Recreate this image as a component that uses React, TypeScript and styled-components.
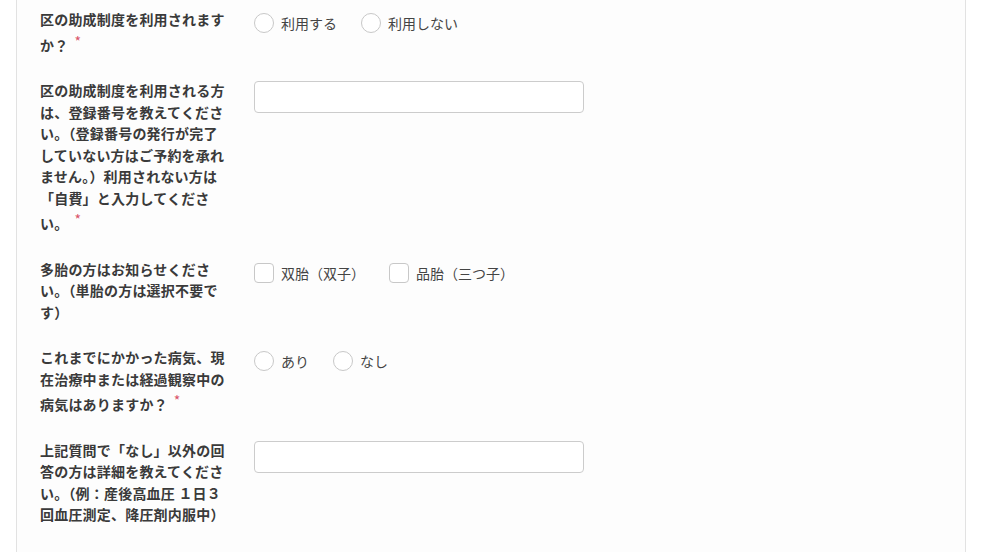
import React from 'react';
import styled, {createGlobalStyle} from 'styled-components';

const GlobalStyle = createGlobalStyle`
  html, body {
    margin: 0;
    padding: 0;
    background: #ffffff;
  }
  body {
    font-family: "Noto Sans CJK JP", "Noto Sans", sans-serif;
  }
`

const Panel = styled.div`
  margin: 0 17px 0 16px;
  border-left: 1px solid #e2e2e2;
  border-right: 1px solid #e2e2e2;
  background: #fdfdfd;
  padding: 9px 23px 24px;
  min-height: 552px;
  box-sizing: border-box;
  display: flex;
  flex-direction: column;
  gap: 24px;
`

const Row = styled.div`
  display: grid;
  grid-template-columns: 190px 330px;
  column-gap: 24px;
  align-items: start;
`

const Label = styled.div`
  font-size: 14px;
  font-weight: bold;
  color: #3a3a3a;
  line-height: 21.5px;
  letter-spacing: 0.2px;
`

const LabelLine = styled.div<{ $marked?: boolean }>`
  padding-top: ${p => p.$marked ? '3px' : '0'};
`

const Required = styled.span`
  color: #d9546a;
  font-size: 14px;
  font-weight: normal;
  vertical-align: 4px;
  margin-left: 6px;
  line-height: 1;
`

const Options = styled.div`
  display: flex;
  gap: 24px;
  margin-top: 4px;
`

const Option = styled.label`
  display: flex;
  align-items: center;
  gap: 7px;
  font-size: 14px;
  color: #444;
  line-height: 20px;
  cursor: pointer;
`

const Mark = styled.span<{ $round?: boolean }>`
  width: 20px;
  height: 20px;
  box-sizing: border-box;
  border: 1px solid #c8c8c8;
  border-radius: ${p => p.$round ? '50%' : '4px'};
  background: #fff;
  flex-shrink: 0;
`

const TextInput = styled.input`
  margin-top: 1px;
  width: 330px;
  height: 32px;
  box-sizing: border-box;
  border: 1px solid #cccccc;
  border-radius: 4px;
  background: #fff;
  outline: none;
`

interface Question {
    label: string[],
    required?: boolean,
    kind: 'radio' | 'checkbox' | 'text',
    options?: string[]
}

const questions: Question[] = [
    {label: ['区の助成制度を利用されます', 'か？'], required: true, kind: 'radio', options: ['利用する', '利用しない']},
    {
        label: ['区の助成制度を利用される方', 'は、登録番号を教えてくださ', 'い。（登録番号の発行が完了', 'していない方はご予約を承れ', 'ません。）利用されない方は', '「自費」と入力してくださ', 'い。'],
        required: true, kind: 'text'
    },
    {label: ['多胎の方はお知らせくださ', 'い。（単胎の方は選択不要で', 'す）'], kind: 'checkbox', options: ['双胎（双子）', '品胎（三つ子）']},
    {label: ['これまでにかかった病気、現', '在治療中または経過観察中の', '病気はありますか？'], required: true, kind: 'radio', options: ['あり', 'なし']},
    {label: ['上記質問で「なし」以外の回', '答の方は詳細を教えてくださ', 'い。（例：産後高血圧 １日３', '回血圧測定、降圧剤内服中）'], kind: 'text'},
]

const App: React.FC = () => {
    return (
        <>
            <GlobalStyle/>
            <Panel>
                {questions.map((q, i) => (
                    <Row key={i}>
                        <Label>
                            {q.label.map((line, j) => {
                                const marked = !!q.required && j === q.label.length - 1;
                                return (
                                    <LabelLine key={j} $marked={marked}>
                                        {line}
                                        {marked && <Required>*</Required>}
                                    </LabelLine>
                                )
                            })}
                        </Label>
                        {q.kind === 'text' ? (
                            <TextInput type="text"/>
                        ) : (
                            <Options>
                                {q.options!.map((opt) => (
                                    <Option key={opt}>
                                        <Mark $round={q.kind === 'radio'}/>
                                        {opt}
                                    </Option>
                                ))}
                            </Options>
                        )}
                    </Row>
                ))}
            </Panel>
        </>
    )
}

export default App
